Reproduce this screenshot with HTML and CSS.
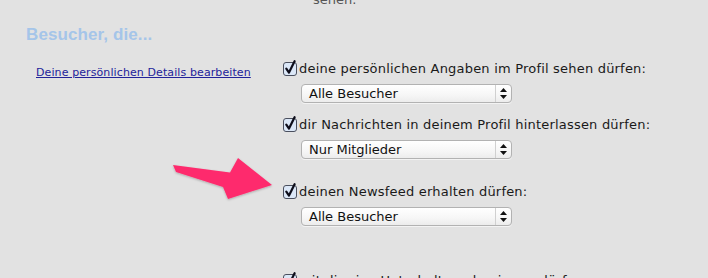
FILE: index.html
```html
<!DOCTYPE html>
<html lang="de">
<head>
<meta charset="utf-8">
<link rel="stylesheet" href="styles.css">
</head>
<body>
<div class="page">
  <div class="prev">sehen.</div>
  <h2 class="heading">Besucher, die...</h2>

  <div class="section">
    <div class="side"><a href="#" class="link">Deine persönlichen Details bearbeiten</a></div>
    <div class="opts">
      <div class="opt">
        <label class="check">
          <span class="box"><svg width="15" height="16" viewBox="0 0 15 16"><rect x="0.5" y="2.5" width="13" height="13" rx="2.5" class="boxbg"/><path d="M3.3 8.6 L6 12.6 L11.6 1.2" class="tick"/></svg></span>
          <span class="label">deine persönlichen Angaben im Profil sehen dürfen:</span>
        </label>
        <div class="select"><span class="val">Alle Besucher</span><span class="arr"><svg width="7" height="11" viewBox="0 0 7 11"><path d="M3.5 0 L7 4 L0 4 Z M0 7 L7 7 L3.5 11 Z"/></svg></span></div>
      </div>
      <div class="opt">
        <label class="check">
          <span class="box"><svg width="15" height="16" viewBox="0 0 15 16"><rect x="0.5" y="2.5" width="13" height="13" rx="2.5" class="boxbg"/><path d="M3.3 8.6 L6 12.6 L11.6 1.2" class="tick"/></svg></span>
          <span class="label">dir Nachrichten in deinem Profil hinterlassen dürfen:</span>
        </label>
        <div class="select"><span class="val">Nur Mitglieder</span><span class="arr"><svg width="7" height="11" viewBox="0 0 7 11"><path d="M3.5 0 L7 4 L0 4 Z M0 7 L7 7 L3.5 11 Z"/></svg></span></div>
      </div>
      <div class="opt opt-gap">
        <label class="check">
          <span class="box"><svg width="15" height="16" viewBox="0 0 15 16"><rect x="0.5" y="2.5" width="13" height="13" rx="2.5" class="boxbg"/><path d="M3.3 8.6 L6 12.6 L11.6 1.2" class="tick"/></svg></span>
          <span class="label">deinen Newsfeed erhalten dürfen:</span>
        </label>
        <div class="select"><span class="val">Alle Besucher</span><span class="arr"><svg width="7" height="11" viewBox="0 0 7 11"><path d="M3.5 0 L7 4 L0 4 Z M0 7 L7 7 L3.5 11 Z"/></svg></span></div>
      </div>
    </div>
  </div>

  <div class="section section-next">
    <div class="side"><a href="#" class="link">Deine Kontaktmöglichkeiten bearbeiten</a></div>
    <div class="opts">
      <div class="opt">
        <label class="check">
          <span class="box"><svg width="15" height="16" viewBox="0 0 15 16"><rect x="0.5" y="2.5" width="13" height="13" rx="2.5" class="boxbg"/><path d="M3.3 8.6 L6 12.6 L11.6 1.2" class="tick"/></svg></span>
          <span class="label">mit dir eine Unterhaltung beginnen dürfen:</span>
        </label>
      </div>
    </div>
  </div>

  <svg class="pointer" width="110" height="50" viewBox="170 155 110 50">
    <defs>
      <filter id="sh" x="-10%" y="-10%" width="130%" height="140%">
        <feDropShadow dx="0" dy="1" stdDeviation="1" flood-color="#000" flood-opacity="0.25"/>
      </filter>
    </defs>
    <path d="M173 165 L230 172.5 L238 158 L272 185 L228 199 L223 187 L176 172 Z" fill="#fe2c6d" filter="url(#sh)"/>
  </svg>
</div>
</body>
</html>
```

FILE: styles.css
```css
html, body {
  margin: 0;
  padding: 0;
}
body {
  background: #e2e2e2;
  font-family: "DejaVu Sans", Verdana, sans-serif;
  color: #1a1a1a;
  height: 278px;
  overflow: hidden;
}
.page {
  position: relative;
  display: flow-root;
}
.prev {
  margin-top: -7px;
  padding-left: 313px;
  font-size: 13px;
  line-height: 14px;
  color: #555;
}
.heading {
  margin: 18px 0 0 26px;
  font-family: "Liberation Sans", Arial, sans-serif;
  font-weight: bold;
  font-size: 17px;
  line-height: 20px;
  color: #a5c5e9;
  letter-spacing: 0.1px;
}
.section {
  display: grid;
  grid-template-columns: 283px 1fr;
  margin-top: 15px;
}
.section-next {
  margin-top: 33px;
}
.side {
  padding-left: 36px;
  padding-top: 1px;
}
.link {
  font-size: 11px;
  line-height: 14px;
  color: #22229a;
  text-decoration: underline;
  letter-spacing: 0.1px;
}
.opts {
  display: flex;
  flex-direction: column;
}
.opt {
  display: flex;
  flex-direction: column;
  margin-bottom: 13px;
}
.opt-gap {
  margin-top: 11px;
}
.check {
  display: flex;
  align-items: center;
  height: 16px;
  font-size: 13px;
}
.box {
  display: block;
  width: 15px;
  height: 16px;
  margin-right: 1px;
}
.box svg {
  display: block;
}
.boxbg {
  fill: #dbe7f7;
  stroke: #4a4f5e;
  stroke-width: 1;
}
.tick {
  fill: none;
  stroke: #0d0d1a;
  stroke-width: 2.2;
  stroke-linecap: round;
  stroke-linejoin: round;
}
.label {
  color: #1a1a1a;
  letter-spacing: 0.2px;
}
.select {
  display: flex;
  align-items: center;
  margin: 8px 0 0 18px;
  width: 209px;
  height: 17px;
  border: 1px solid #b2b2b2;
  border-radius: 4px;
  background: linear-gradient(#ffffff, #f6f6f6 60%, #ececec);
  box-shadow: 0 1px 0 rgba(255,255,255,0.6);
}
.val {
  flex: 1;
  padding-left: 7px;
  font-family: "DejaVu Sans", sans-serif;
  font-size: 13px;
  line-height: 17px;
  color: #111;
}
.arr {
  display: flex;
  align-items: center;
  justify-content: center;
  width: 15px;
  height: 17px;
  border-left: 1px solid #d0d0d0;
}
.arr svg {
  display: block;
  fill: #111;
}
.pointer {
  position: absolute;
  left: 170px;
  top: 155px;
}
```
